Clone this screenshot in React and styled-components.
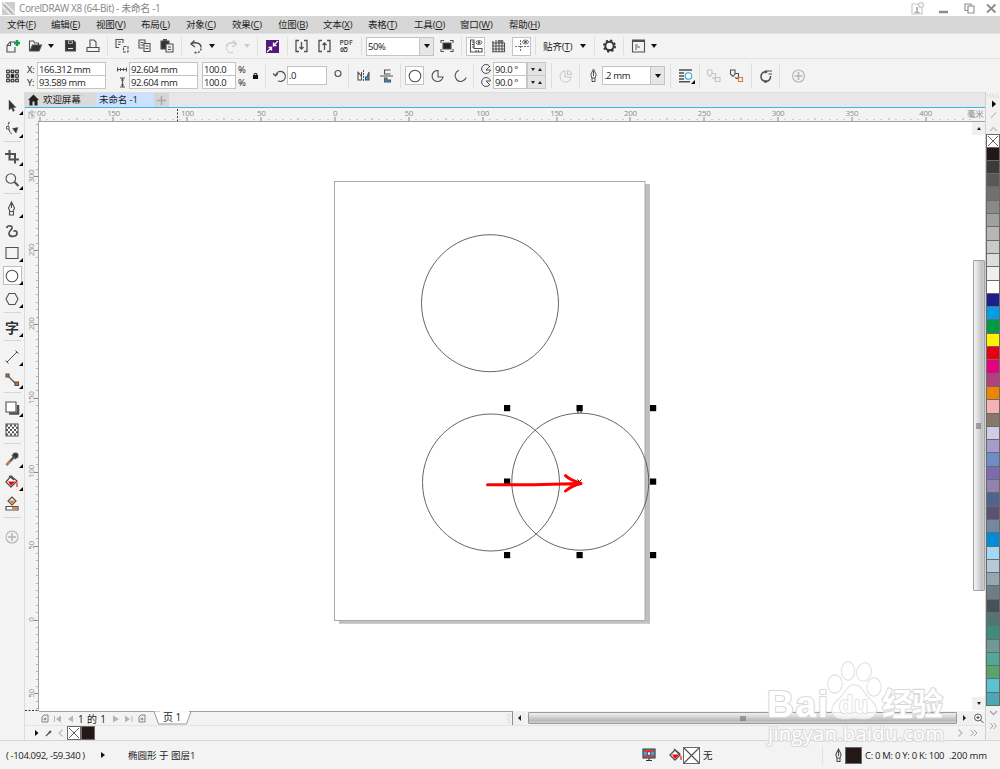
import React from 'react'
import styled, { createGlobalStyle } from 'styled-components';

const GlobalStyle=createGlobalStyle`
    *{box-sizing:border-box;}
    body{
        margin:0;
        overflow:hidden;
        background:#f3f3f3;
        font-family:'Open Sans','Noto Sans CJK SC',sans-serif;
        font-size:9.5px;
        color:#222;
    }
`;

const Window=styled.div`
    width:1000px;
    height:769px;
    display:flex;
    flex-direction:column;
    position:relative;
    overflow:hidden;
    white-space:nowrap;
`;

const TitleBar=styled.div`
    height:16px;
    flex:none;
    display:flex;
    align-items:center;
    background:#fff;
    color:#858585;
    font-size:10px;
    line-height:16px;
`;

const Title=styled.span`
    margin-left:4px;
    width:892px;
    letter-spacing:-0.4px;
`;

const MenuBar=styled.div`
    height:17px;
    flex:none;
    display:flex;
    align-items:center;
    padding-left:7px;
    background:#d7d7d7;
    line-height:16px;
`;

const MenuItem=styled.span`
    width:${(p)=>p.$w}px;
    letter-spacing:-0.15px;
`;

const Toolbar=styled.div`
    height:${(p)=>p.$h}px;
    flex:none;
    display:flex;
    align-items:center;
    background:#f3f3f3;
    border-top:1px solid #e2e2e2;
`;

const Icon=styled.svg`
    flex:none;
    display:block;
    margin-left:${(p)=>p.$gap||0}px;
    overflow:visible;
    fill:none;
    stroke:${(p)=>p.$color||'#505050'};
    stroke-width:1.1;
`;

const Sep=styled.div`
    width:1px;
    height:${(p)=>p.$h||18}px;
    flex:none;
    margin-left:${(p)=>p.$gap}px;
    background:#dedede;
`;

const Caret=styled.div`
    flex:none;
    width:0;
    height:0;
    margin-left:${(p)=>p.$gap||0}px;
    border:3px solid transparent;
    border-top:4px solid ${(p)=>p.$color||'#111'};
    border-bottom:0;
`;

const Label=styled.span`
    flex:none;
    width:${(p)=>p.$w}px;
    margin-left:${(p)=>p.$gap||0}px;
    letter-spacing:${(p)=>p.$ls||0}px;
    line-height:13px;
`;

const Stack=styled.div`
    flex:none;
    display:flex;
    flex-direction:column;
    width:${(p)=>p.$w}px;
    margin-left:${(p)=>p.$gap||0}px;
    gap:${(p)=>p.$space||0}px;
`;

const Field=styled.div`
    flex:none;
    display:flex;
    align-items:center;
    width:${(p)=>p.$w}px;
    height:${(p)=>p.$h||14}px;
    margin-left:${(p)=>p.$gap||0}px;
    padding-left:1px;
    background:#fff;
    border:1px solid #c3c3c3;
    line-height:11px;
    letter-spacing:-0.38px;
    & + &{
        margin-top:-1px;
    }
`;

const DropButton=styled.div`
    display:flex;
    align-items:center;
    justify-content:center;
    width:14px;
    height:100%;
    margin-left:auto;
    background:#e6e6e6;
    border-left:1px solid #c3c3c3;
`;

const Pressed=styled.div`
    flex:none;
    display:flex;
    align-items:center;
    justify-content:center;
    width:19px;
    height:19px;
    margin-left:${(p)=>p.$gap||0}px;
    background:#fff;
    border:1px solid #c4c4c4;
`;

const Spinner=styled.div`
    display:flex;
    align-items:center;
    justify-content:space-evenly;
    height:14px;
    background:#e4e4e4;
    border:1px solid #c8c8c8;
    & + &{
        margin-top:-1px;
    }
`;

const Up=styled.div`
    width:0;
    height:0;
    border:2.5px solid transparent;
    border-bottom:3px solid #222;
    border-top:0;
`;

const Down=styled.div`
    width:0;
    height:0;
    border:2.5px solid transparent;
    border-top:3px solid #222;
    border-bottom:0;
`;

const Body=styled.div`
    height:648px;
    flex:none;
    display:flex;
`;

const Toolbox=styled.div`
    width:25px;
    display:flex;
    flex-direction:column;
    align-items:center;
    padding-top:2px;
    border-right:1px solid #dcdcdc;
    background:#f3f3f3;
`;

const Tool=styled.div`
    flex:none;
    display:flex;
    align-items:center;
    justify-content:center;
    position:relative;
    width:19px;
    height:${(p)=>p.$h}px;
`;

const ActiveTool=styled.div`
    display:flex;
    align-items:center;
    justify-content:center;
    width:19px;
    height:19px;
    background:#fff;
    border:1px solid #bdbdbd;
`;

const Flyout=styled.div`
    position:absolute;
    right:-1px;
    bottom:2px;
    width:0;
    height:0;
    border-left:4px solid transparent;
    border-bottom:4px solid #000;
`;

const ToolSep=styled.div`
    width:17px;
    height:1px;
    margin:${(p)=>p.$m||'0 0 3px'};
    flex:none;
    background:#d6d6d6;
`;

const Center=styled.div`
    width:960px;
    display:flex;
    flex-direction:column;
`;

const Tabs=styled.div`
    height:16px;
    flex:none;
    display:flex;
    align-items:stretch;
    background:#e7e7e7;
    border-top:1px solid #dedede;
    border-bottom:1px solid #3fb4e6;
    line-height:14px;
`;

const Tab=styled.div`
    display:flex;
    align-items:center;
    width:${(p)=>p.$w}px;
    padding-left:3px;
    gap:4px;
    background:${(p)=>p.$bg};
    letter-spacing:-0.1px;
`;

const Workspace=styled.div`
    display:flex;
    height:589px;
    flex:none;
`;

const TopRuler=styled.svg`
    display:block;
    flex:none;
    background:#f3f3f3;
    letter-spacing:-0.35px;
`;

const SideRuler=styled.svg`
    display:block;
    flex:none;
    background:#f3f3f3;
    letter-spacing:-0.35px;
`;

const Canvas=styled.svg`
    display:block;
    flex:none;
    background:#fff;
`;

const VScroll=styled.div`
    width:13px;
    display:flex;
    flex-direction:column;
    align-items:center;
    background:#fff;
`;

const ArrowBox=styled.div`
    flex:none;
    display:flex;
    align-items:center;
    justify-content:center;
    width:${(p)=>p.$w}px;
    height:13px;
    background:#f0f0f0;
`;

const VThumb=styled.div`
    display:flex;
    align-items:center;
    justify-content:center;
    width:12px;
    height:331px;
    margin:125px 0 106px;
    border:1px solid #a2a2a2;
    border-radius:1px;
    background:linear-gradient(90deg,#f4f4f4,#dcdcde 40%,#bcbdbf 85%,#d5d5d5);
`;

const BottomBar=styled.div`
    height:14px;
    flex:none;
    display:flex;
    align-items:center;
    background:#f3f3f3;
`;

const Pager=styled.div`
    width:121px;
    height:14px;
    margin-left:14px;
    padding-left:2px;
    display:flex;
    align-items:center;
    border-top:1px solid #a0a0a0;
    flex:none;
    font-size:10px;
    line-height:12px;
`;

const PageCount=styled.div`
    display:flex;
    justify-content:space-between;
    width:28px;
    margin:0 7px 0 5px;
`;

const PageTab=styled(Icon)`
    margin-right:-1px;
`;

const PageFill=styled.div`
    width:324px;
    height:14px;
    display:flex;
    align-items:center;
    justify-content:flex-end;
    padding-right:1px;
    border-top:1px solid #a0a0a0;
    border-right:1px solid #8f8f8f;
    flex:none;
`;

const HThumb=styled.div`
    flex:none;
    display:flex;
    align-items:center;
    justify-content:center;
    width:429px;
    height:12px;
    margin-left:3px;
    border:1px solid #999;
    border-radius:1px;
    background:linear-gradient(#f0f0f0,#d8d8d9 35%,#b7b8ba 75%,#d0d0d0);
`;

const DocPalette=styled.div`
    height:15px;
    flex:none;
    display:flex;
    align-items:center;
    border-top:1px solid #e4e4e4;
    background:#f3f3f3;
`;

const Swatch=styled.div`
    flex:none;
    width:${(p)=>p.$w||14}px;
    height:${(p)=>p.$h||13.3}px;
    margin-left:${(p)=>p.$gap||0}px;
    border:1px solid #6a6a6a;
    border-width:${(p)=>p.$h?'1px':'0 1px 1px'};
    background:${(p)=>p.$c};
`;

const Palette=styled.div`
    width:15px;
    display:flex;
    flex-direction:column;
    align-items:center;
    padding-top:2px;
    border-left:1px solid #cfcfcf;
    background:#f1f1f1;
`;

const StatusBar=styled.div`
    height:29px;
    flex:none;
    display:flex;
    align-items:center;
    padding-left:6px;
    background:#f3f3f3;
    border-top:1px solid #d6d6d6;
`;

const Watermark=styled.svg`
    position:absolute;
    left:760px;
    top:655px;
    paint-order:stroke;
`;

const menus=[
    ['文件','F',44],['编辑','E',45],['视图','V',45],['布局','L',45],['对象','C',46],['效果','C',46],
    ['位图','B',45],['文本','X',45],['表格','T',46],['工具','O',46],['窗口','W',49],['帮助','H',45],
];

const swatches=['#231815','#3e3a39','#595757','#727171','#898989','#9fa0a0','#b5b6b5','#c9caca','#dcdddd','#efefef','#fff',
    '#1d2088','#00a0e9','#009944','#fff100','#e60012','#e4007f','#b04180','#f08300','#f5b2b2','#88766a','#cfcce6','#a69bcb',
    '#6f8cc8','#7b6cb0','#9283ac','#50648e','#5a5270','#7388a2','#008cd6','#a0d9f6','#b5cad7','#95a7b0','#6e7e86','#48515a',
    '#517672','#3f8c7c','#709896','#52a894','#57a46c','#5ac2d0','#4ca8b6'];

const SCALE=1.4767;

function HorizontalRuler(){
    const ticks=[];
    for(let mm=-200;mm<=430;mm+=5){
        const x=335+mm*SCALE;
        if(x<39) continue;
        const major=mm%50===0;
        ticks.push(<rect key={mm} x={Math.round(x)-.5} y={major?117:mm%25===0?118:119} width="1" height={major?4:mm%25===0?2:1} fill={major?'#888':'#aaa'}/>);
    }
    const labels=[-150,-100,-50,0,50,100,150,200,250,300,350,400];
    return (
        <TopRuler width="960" height="14" viewBox="25 108 960 14" fontSize="8" fill="#8c8c8c">
            <path d="M29 112l7 0M29 112v7M29 112l6 6M31 115h4M32 110v9" stroke="#999" strokeWidth=".7" fill="none"/>
            {ticks}
            {labels.map((v)=><text key={v} x={335+v*SCALE} y="116" textAnchor="middle">{Math.abs(v)}</text>)}
            <text x="37" y="116">00</text>
            <text x="967" y="116.500" fontSize="8.500">毫米</text>
            <path d="M177.500 109v12" stroke="#333" strokeDasharray="2 1.500"/>
            <rect x="38" y="121" width="947" height="1" fill="#a3a3a3"/>
        </TopRuler>
    )
}

function VerticalRuler(){
    const ticks=[];
    for(let mm=-60;mm<=335;mm+=5){
        const y=619.5-mm*1.478;
        const major=mm%50===0;
        ticks.push(<rect key={mm} x={major?34:36} y={Math.round(y)} width={major?4:2} height="1" fill={major?'#888':'#b5b5b5'}/>);
    }
    const labels=[300,250,200,150,100,50,0,-50];
    return (
        <SideRuler width="14" height="589" viewBox="25 122 14 589" fontSize="8" fill="#8c8c8c">
            {ticks}
            {labels.map((v)=>{
                const y=619.5-v*1.478;
                return <text key={v} x="34" y={y} transform={`rotate(-90 34 ${y})`} textAnchor="middle">{Math.abs(v)}</text>
            })}
            <path d="M25 710.500h13" stroke="#333" strokeDasharray="2 1.500"/>
            <rect x="38" y="121" width="1" height="590" fill="#a3a3a3"/>
        </SideRuler>
    )
}

function Drawing(){
    const handles=[[507,408],[579.5,408],[653,408],[507,481.5],[653,481.5],[507,555],[579.5,555],[653,555]];
    return (
        <Canvas width="933" height="589" viewBox="39 122 933 589" fill="none" stroke="#555" strokeWidth=".9">
            <path d="M339 620h311v3.700h-311zM645 184h5v439h-5z" fill="#c0c0c0" stroke="none"/>
            <rect x="334.500" y="181.500" width="310.500" height="439" stroke="#aaa" strokeWidth="1"/>
            <circle cx="490" cy="303.200" r="68.500"/>
            <circle cx="491" cy="482.500" r="68.500"/>
            <circle cx="580.300" cy="481.700" r="68.500"/>
            {handles.map(([x,y])=><rect key={x+'-'+y} x={x-3} y={y-3} width="6.200" height="6.200" fill="#000" stroke="none"/>)}
            <path d="M578 411v2M581 411v2M577.500 479.500l4 4m0-4l-4 4" stroke="#000"/>
            <path d="M487.500 484.700H534L581 483.500M565.500 475.700Q570 480 581 483.500Q571 486 565.500 491" stroke="#f00" strokeWidth="3" strokeLinecap="round" strokeLinejoin="round"/>
        </Canvas>
    )
}

function StandardBar(){
    return (
        <Toolbar $h={25}>
            <Icon $gap={6} width="14" height="14"><path d="M9 3H4L1 6.500V13h8V8M4.500 3v3.500H1"/><path d="M11 1v6M8 4h6" stroke="#11a04a" strokeWidth="2.500"/></Icon>
            <Icon $gap={8} width="14" height="14"><path d="M1.500 12V2h4l1 2h4v2"/><path d="M2 12l2.500-6h9L11 12z" fill="#333"/></Icon>
            <Caret $gap={6}/>
            <Icon $gap={10} width="13" height="14"><path d="M1.500 1.500h8l2 2v8.500h-10z" fill="#333"/><path d="M4.500 2h4v2.500h-4z" fill="#333" stroke="#ddd" strokeWidth=".7"/><path d="M4 9.500h5" stroke="#eee"/></Icon>
            <Icon $gap={9} width="14" height="14"><path d="M4 8V1h4l2 2v5M1 8.500h12v4H1z"/></Icon>
            <Sep $gap={7}/>
            <Icon $gap={7} width="14" height="14"><path d="M4 8.500H1v-8h7v3.500M3 3h3M3 5.500h2.500"/><path d="M8.500 7.500h4.500v5.500H8.500z" strokeDasharray="3 1"/></Icon>
            <Icon $gap={9} width="13" height="14"><path d="M5 9H1V1h6v3M2.500 3.500h3M2.500 6h3M6 4.500h6v8H6zM7.500 7h3M7.500 9.500h3"/></Icon>
            <Icon $gap={9} width="14" height="14"><path d="M1 2h8v8H1z" fill="#333"/><path d="M3 1h4" strokeWidth="2"/><path d="M6 5h7v8H6z" fill="#eee"/><path d="M8 8h3M8 10.500h3"/></Icon>
            <Sep $gap={7}/>
            <Icon $gap={7} width="14" height="14"><path d="M2 5C5 3 12 3 12 8.500" strokeWidth="1.500"/><path d="M12 9.500A4.500 4.500 0 014.500 12.500" strokeWidth="1.500" strokeDasharray="2 1.300"/><path d="M5.500 1.500L2 5l4 3" strokeWidth="1.400"/></Icon>
            <Caret $gap={6}/>
            <Icon $gap={10} width="13" height="14" $color="#ccc"><path d="M11.500 5C8.500 3 1.500 3 1.500 8.500" strokeWidth="1.500"/><path d="M1.500 9.500A4.500 4.500 0 009 12.500" strokeWidth="1.500" strokeDasharray="2 1.300"/><path d="M8 1.500L11.500 5l-4 3" strokeWidth="1.400"/></Icon>
            <Caret $gap={6} $color="#ccc"/>
            <Sep $gap={7}/>
            <Icon $gap={8} width="13" height="13"><path d="M0 0h13v13H0z" fill="#50197d" stroke="none"/><path d="M12 1L7.500 5.500V2.500M7.500 5.500h3M1 12l4.500-4.500v3M5.500 7.500h-3" stroke="#fff" strokeWidth="1.300"/></Icon>
            <Sep $gap={8}/>
            <Icon $gap={7} width="13" height="14"><path d="M4 1.500H1v11h3M9 1.500h3v11H9M6.500 3v7M4.500 8l2 2 2-2" strokeWidth="1.300"/></Icon>
            <Icon $gap={10} width="13" height="14"><path d="M4 1.500H1v11h3M9 1.500h3v11H9M6.500 4v7M4.500 6l2-2 2 2" strokeWidth="1.300"/></Icon>
            <Icon $gap={9} width="13" height="14"><text x="-.5" y="6" fontSize="7" fontWeight="600" fill="#444" stroke="none">PDF</text><path d="M1 9h2v3.500H1zM4 8.500v4h3v-4zM5.500 8v2" strokeWidth="1"/></Icon>
            <Sep $gap={8}/>
            <Field $gap={4} $w={68} $h={19}>50%<DropButton><Caret/></DropButton></Field>
            <Icon $gap={6} width="14" height="14"><path d="M3 4h8v6H3z" fill="#222"/><path d="M1 4V1.500h3M10 1.500h3V4M13 10v2.500h-3M4 12.500H1V10"/></Icon>
            <Sep $gap={7}/>
            <Pressed $gap={4}><Icon width="14" height="14"><path d="M1.500 1v12H13V9.500H5V1zM3 3h2M3 5.500h2M3 8h2M7 11v2M9.500 11v2"/><ellipse cx="10" cy="3.500" rx="3" ry="2" strokeWidth=".8"/><circle cx="10" cy="3.500" r=".8" fill="#444"/></Icon></Pressed>
            <Icon $gap={7} width="13" height="14"><path d="M1 2v11M4 1v12M7 1v12M10 1v12M12.500 4v9M0 4h13M0 7h13M0 10h13M0 12.800h13"/><path d="M6 1.500h5v2H6z" fill="#777" strokeWidth=".5"/></Icon>
            <Pressed $gap={7}><Icon width="14" height="14"><path d="M5.500 1v12M0 7.500h14" strokeDasharray="2 1" strokeWidth=".8"/><ellipse cx="10.500" cy="3" rx="3" ry="2" strokeWidth=".8"/><circle cx="10.500" cy="3" r=".8" fill="#444"/></Icon></Pressed>
            <Sep $gap={4}/>
            <Label $gap={7} $w={31} $ls={-0.1}>贴齐(<u>T</u>)</Label>
            <Caret $gap={6}/>
            <Sep $gap={8}/>
            <Icon $gap={8} width="13" height="14"><circle cx="6.500" cy="7" r="4.200" stroke="#333" strokeWidth="2"/><circle cx="6.500" cy="7" r="5.700" stroke="#333" strokeWidth="1.600" strokeDasharray="2.240 2.240"/></Icon>
            <Sep $gap={7}/>
            <Icon $gap={8} width="13" height="14"><path d="M.5 1h12v12H.5z"/><path d="M.5 2h12" strokeWidth="2"/><path d="M3 6h3M3 8h5M3 10h2" strokeWidth=".9"/></Icon>
            <Caret $gap={6}/>
        </Toolbar>
    )
}

function PropertyBar(){
    return (
        <Toolbar $h={34}>
            <Icon $gap={6} width="13" height="14">
                {[2,6.5,11].map((x)=>[2.5,7,11.5].map((y)=><rect key={x+'-'+y} x={x-1.3} y={y-1.3} width="2.600" height="2.600" fill={x===6.5&&y===7?'#111':'none'} stroke="#222" strokeWidth="1"/>))}
                <path d="M3.500 2.500h2M8 2.500h2M3.500 11.500h2M8 11.500h2M2 4v2M11 4v2M2 8v2M11 8v2" strokeWidth=".8"/>
            </Icon>
            <Stack $gap={8} $w={10}><Label $w={10} $ls={-.3}>X:</Label><Label $w={10} $ls={-.3}>Y:</Label></Stack>
            <Stack $w={69}><Field $w={69}>166.312 mm</Field><Field $w={69}>93.589 mm</Field></Stack>
            <Stack $gap={11} $w={12} $space={2}>
                <Icon width="10" height="11"><path d="M.5 3.500v4M9.500 3.500v4M1 5.500h8M3.500 4v3M6.500 4v3" strokeWidth="1"/></Icon>
                <Icon width="10" height="11"><path d="M3 1h5M3 10h5M5.500 1v9M4 3h3M4 8h3"/></Icon>
            </Stack>
            <Stack $w={69}><Field $w={69}>92.604 mm</Field><Field $w={69}>92.604 mm</Field></Stack>
            <Stack $gap={4} $w={34}><Field $w={34}>100.0</Field><Field $w={34}>100.0</Field></Stack>
            <Stack $gap={2} $w={15}><Label $w={10}>%</Label><Label $w={10}>%</Label></Stack>
            <Icon width="5" height="8" $color="#111"><path d="M.5 3.500h4v3h-4z" fill="#111"/><path d="M1.200 3V1.500h2.600V3" strokeWidth=".9"/></Icon>
            <Sep $gap={7} $h={25}/>
            <Icon $gap={7} width="13" height="14"><path d="M2.500 6.500a5 5 0 112.500 5.300" /><path d="M0 4.500l2.500 2.500L5 4.500"/></Icon>
            <Field $gap={1} $w={40} $h={19}>.0</Field>
            <Icon $gap={7} width="8" height="14"><circle cx="4" cy="4.500" r="3"/></Icon>
            <Sep $gap={6} $h={25}/>
            <Icon $gap={8} width="13" height="14"><path d="M1 2.500v8.500h3.500V8.500M1 3l3.500 4.500V3" /><path d="M6.500 1v12" strokeDasharray="2 1" strokeWidth="1"/><path d="M12 3v8H8.500V8H10z" fill="#19a6e6"/></Icon>
            <Icon $gap={10} width="13" height="14"><path d="M10.500 1H4.500v4h6M0 7h13" /><path d="M10.500 13h-6V9H7v2h3.500z" fill="#19a6e6"/></Icon>
            <Sep $gap={7} $h={25}/>
            <Pressed $gap={4}><Icon width="14" height="14"><circle cx="7" cy="7" r="5.800"/></Icon></Pressed>
            <Icon $gap={7} width="13" height="14"><path d="M7 1.500a5.500 5.500 0 105 6.500H7z" /></Icon>
            <Icon $gap={10} width="13" height="14"><path d="M5 1.300a5.700 5.700 0 107.200 7.200"/></Icon>
            <Sep $gap={6} $h={25}/>
            <Stack $gap={7} $w={12} $space={1}>
                <Icon width="11" height="12"><path d="M8.500 3A4.500 4.500 0 109.500 7H5l4-4" strokeWidth="1"/></Icon>
                <Icon width="11" height="12"><path d="M8.500 9A4.500 4.500 0 119.500 5H5l4 4" strokeWidth="1"/></Icon>
            </Stack>
            <Stack $w={34}><Field $w={34}>90.0 °</Field><Field $w={34}>90.0 °</Field></Stack>
            <Stack $w={19}><Spinner><Down/><Up/></Spinner><Spinner><Down/><Up/></Spinner></Stack>
            <Sep $gap={5} $h={25}/>
            <Icon $gap={7} width="13" height="14" $color="#c8c8c8"><path d="M6 2a5.500 5.500 0 106 6H6zM8.500 1.500v4h4a4 4 0 00-4-4"/></Icon>
            <Sep $gap={7} $h={25}/>
            <Icon $gap={10} width="7" height="13"><path d="M3.500 0L.8 5.500 2 9h3l1.200-3.500zM3.500 2v5M2 9v3.500h3V9" strokeWidth="1"/></Icon>
            <Field $gap={5} $w={63} $h={19}>.2 mm<DropButton><Caret/></DropButton></Field>
            <Sep $gap={5} $h={25}/>
            <Icon $gap={8} width="15" height="14"><path d="M0 1h13M0 4h5M0 7h5M0 10h5M0 12.800h11" strokeWidth="1.400"/><circle cx="9.500" cy="7" r="3.300" stroke="#2aa7df" fill="#fff"/><path d="M16 11v4h-4z" fill="#000" stroke="none"/></Icon>
            <Sep $gap={5} $h={25}/>
            <Icon $gap={7} width="14" height="14" $color="#c4c4c4"><path d="M.5 1h4.500v4L3 7.500.5 5zM5 4.500h3.500v4L7 9.500 5 8.500M8.500 8.500h4.500v4H8.500z"/></Icon>
            <Icon $gap={9} width="14" height="14"><path d="M.5 1h4.500v4L3 7.500.5 5zM5 4.500h3.500v4L7 9.500 5 8.500"/><path d="M8.500 8.500h4v4h-4z" stroke="#e8743b"/></Icon>
            <Sep $gap={7} $h={25}/>
            <Icon $gap={7} width="14" height="14"><path d="M7 2.800a4.800 4.800 0 104.500 4.200" strokeWidth="1.500"/><path d="M8 2h5M9.500 5H13" /><path d="M6 1.800h2v2H6zM5.500 11.500h2v2h-2z" fill="#505050" strokeWidth=".5"/></Icon>
            <Sep $gap={6} $h={25}/>
            <Icon $gap={12} width="13" height="14" $color="#b5b5b5"><circle cx="6.500" cy="7" r="6"/><path d="M6.500 3v8M2.500 7h8" strokeWidth="1.600"/></Icon>
        </Toolbar>
    )
}

function ToolItem({h=23,fly=true,active,children}){
    const icon=<Icon width="14" height="14">{children}</Icon>;
    return (
        <Tool $h={h}>
            {active?<ActiveTool>{icon}</ActiveTool>:icon}
            {fly&&<Flyout/>}
        </Tool>
    )
}

function LeftTools(){
    return (
        <Toolbox>
            <ToolItem><path d="M4 1v10l2.500-2 1.500 3.500 1.500-1L8 8.500h3z" fill="#333" strokeWidth=".5"/></ToolItem>
            <ToolItem><path d="M4.500 0C2.500 2 2.500 7 6.500 12" strokeDasharray="3 .8"/><path d="M1.500 4.500h2.500V7H1.500z" fill="#f3f3f3" strokeWidth=".9"/><path d="M7.500 6.500L13 5.500 11 11z" fill="#333" strokeWidth=".5"/></ToolItem>
            <ToolSep $m="1px 0 3px"/>
            <ToolItem><path d="M4.500 0v9.500H14M0 4h10v9.500" strokeWidth="2"/></ToolItem>
            <ToolItem h={24}><circle cx="5.800" cy="5.500" r="4.800"/><path d="M9.500 9l4 4" strokeWidth="2"/></ToolItem>
            <ToolSep $m="1px 0 3px"/>
            <ToolItem><path d="M6.500 0L3.500 6 5 9.500h3L9.500 6zM6.500 1v5M4.500 9.500V13h4V9.500"/></ToolItem>
            <ToolItem fly={false} h={22}><path d="M1.500 4c1-3 6-3 5.500 0-.5 2.500-3.500 3-3 6 .6 3.500 8 3 8-1 0-2-2-3-3.500-1.500" strokeWidth="1.700"/></ToolItem>
            <ToolItem h={22}><path d="M1 1.500h12v11H1z"/></ToolItem>
            <ToolItem active><circle cx="7" cy="7" r="5.800"/></ToolItem>
            <ToolItem><path d="M4 1.500h6L13 7l-3 5.500H4L1 7z"/></ToolItem>
            <ToolSep $m="2px 0 3px"/>
            <ToolItem><text x="0" y="12" fontSize="14" fontWeight="700" fill="#333" stroke="none">字</text></ToolItem>
            <ToolSep $m="1px 0 4px"/>
            <ToolItem><path d="M2 12L12 2M.5 10.500l3 3M10.500.5l3 3" strokeWidth="1"/></ToolItem>
            <ToolItem><path d="M3 3l8 8"/><path d="M1 1h3v3H1zM10 9h3.500v3.500H10z" fill="#e56717"/></ToolItem>
            <ToolSep $m="1px 0 3px"/>
            <ToolItem><path d="M4 12.500h9V4" strokeWidth="2.500"/><path d="M1 1h10v10H1z" fill="#fff"/></ToolItem>
            <ToolItem fly={false} h={22}>
                <path d="M1 1h12v12H1z" fill="#fff"/>
                <path d="M1 2.500h12M1 7h12M1 11.500h12" strokeWidth="2" strokeDasharray="2 2"/>
                <path d="M3 4.700h10M3 9.200h10" strokeWidth="2" strokeDasharray="2 2"/>
            </ToolItem>
            <ToolSep $m="2px 0 3px"/>
            <ToolItem><path d="M9 5l-7.500 8" stroke="#555" strokeWidth="2.500"/><path d="M5.500 9L2 12.500" stroke="#ea8845"/><circle cx="10.500" cy="3.500" r="2.500" fill="#333"/><path d="M7 3l4 4" strokeWidth="1.500"/></ToolItem>
            <ToolItem><path d="M6 1L1 7l5 5 6-6zM4 1l5 4" fill="#fff" strokeWidth="1.300"/><path d="M4 7h5l-3 3zM12 7.500v4.500" fill="red" stroke="red"/></ToolItem>
            <ToolItem fly={false} h={22}><path d="M7 0L3 4l4 4 4-4zM1 9.500h12v3.500H1z" fill="#fff" strokeWidth="1.200"/><path d="M5 4h4L7 6z" fill="#e87b2b" stroke="#e87b2b"/><path d="M7 11.200h5.500" stroke="#e87b2b" strokeWidth="2"/></ToolItem>
            <ToolSep $m="2px 0 7px"/>
            <ToolItem fly={false}><g stroke="#b5b5b5"><circle cx="7" cy="7" r="6"/><path d="M7 3v8M3 7h8" strokeWidth="1.500"/></g></ToolItem>
        </Toolbox>
    )
}

const NoColor=<Icon width="12" height="12" viewBox="0 0 12 12"><path d="M1 1l10 10M11 1L1 11" strokeWidth=".9"/></Icon>;

export default function App() {
  return (
    <>
    <GlobalStyle/>
    <Window>
        <TitleBar>
            <Icon $gap={2} width="13" height="13" $color="none"><path d="M0 0h13v13H0z" fill="#cdcdcd"/><path d="M1 0l12 11M0 4l9 9" stroke="#f4f4f4" strokeWidth="1.300"/><path d="M2 3l8 8" stroke="#b5b5b5" strokeWidth="2"/></Icon>
            <Title>CorelDRAW X8 (64-Bit) - 未命名 -1</Title>
            <Icon width="13" height="13" $color="#c6c6c6"><path d="M1 2h10v10H1z"/><path d="M3.500 10.500h5M6 5v5" stroke="#aaa" strokeWidth="1.600"/><circle cx="10" cy="3" r="2.500" fill="#f4f4f4"/></Icon>
            <Icon $gap={15} width="9" height="13" $color="#8b8b8b"><path d="M0 10h9" strokeWidth="2.500"/></Icon>
            <Icon $gap={16} width="11" height="13" $color="#8b8b8b"><path d="M4 4h6v7H4zM7 3.500V2H1v6.500h2.500"/></Icon>
            <Icon $gap={11} width="10" height="13" $color="#8b8b8b"><path d="M1 2.500l8.500 8M9.500 2.500L1 10.500" strokeWidth="1.800"/></Icon>
        </TitleBar>
        <MenuBar>
            {menus.map(([name,key,w])=><MenuItem key={name} $w={w}>{name}(<u>{key}</u>)</MenuItem>)}
        </MenuBar>
        <StandardBar/>
        <PropertyBar/>
        <Body>
            <LeftTools/>
            <Center>
                <Tabs>
                    <Tab $w={71} $bg="#dadada"><Icon width="11" height="12" $color="none"><path d="M5.500.5L0 6h1.500v5.500h3v-4h2v4h3V6H11z" fill="#222"/></Icon>欢迎屏幕</Tab>
                    <Tab $w={58} $bg="#cbe1ff">未命名 -1</Tab>
                    <Tab $w={15} $bg="#d5d5d5"><Icon width="9" height="9" $color="#a8a8a8"><path d="M4.500 0v9M0 4.500h9" strokeWidth="1.500"/></Icon></Tab>
                </Tabs>
                <HorizontalRuler/>
                <Workspace>
                    <VerticalRuler/>
                    <Drawing/>
                    <VScroll>
                        <ArrowBox $w={13}><Up/></ArrowBox>
                        <VThumb><Icon width="5" height="6"><path d="M0 1h5M0 3h5M0 5h5" strokeWidth=".9"/></Icon></VThumb>
                        <ArrowBox $w={13}><Down/></ArrowBox>
                    </VScroll>
                </Workspace>
                <BottomBar>
                    <Pager>
                        <Icon width="8" height="9" $color="#777"><path d="M1 3l2-2h4v7H1zM4 3.500v3M2.500 5h3" strokeWidth=".9"/></Icon>
                        <Icon $gap={5} width="8" height="8" $color="none"><path d="M0 1h1v6H0zM7 .5v7L2 4z" fill="#b5b5b5"/></Icon>
                        <Icon $gap={5} width="6" height="8" $color="none"><path d="M6 .5v7L1 4z" fill="#b5b5b5"/></Icon>
                        <PageCount><span>1</span><span>的</span><span>1</span></PageCount>
                        <Icon width="6" height="8" $color="none"><path d="M0 .5v7l6-3.500z" fill="#b5b5b5"/></Icon>
                        <Icon $gap={6} width="8" height="8" $color="none"><path d="M0 .5v7l5-3.500zM6.500 1h1v6h-1z" fill="#b5b5b5"/></Icon>
                        <Icon $gap={5} width="8" height="9" $color="#777"><path d="M1 3l2-2h4v7H1zM4 3.500v3M2.500 5h3" strokeWidth=".9"/></Icon>
                    </Pager>
                    <PageTab width="30" height="14"><path d="M-6 .5L-1.500 13H26.500L31 .5" fill="#fff" stroke="#999" strokeWidth="1"/><text x="3" y="10" fontSize="10" fill="#222" stroke="none">页 1</text></PageTab>
                    <PageFill><Icon width="4" height="10" $color="#c8c8c8"><path d="M1 0v10M3 1v9" strokeDasharray="1 1.500"/></Icon></PageFill>
                    <ArrowBox $w={12}><Icon width="4" height="6" $color="none"><path d="M4 0v6L1 3z" fill="#222"/></Icon></ArrowBox>
                    <HThumb><Icon width="6" height="5"><path d="M1 0v5M3 0v5M5 0v5" strokeWidth=".9"/></Icon></HThumb>
                    <ArrowBox $w={15}><Icon width="4" height="6" $color="none"><path d="M0 0v6l3-3z" fill="#222"/></Icon></ArrowBox>
                    <Icon $gap={2} width="10" height="10"><circle cx="4" cy="4.500" r="3.500" strokeWidth=".9"/><path d="M4 3v3M2.500 4.500h3M6.500 7l3 3" strokeWidth="1"/></Icon>
                </BottomBar>
                <DocPalette>
                    <Icon $gap={10} width="4" height="8" $color="none"><path d="M0 1v6l3.500-3z" fill="#111"/></Icon>
                    <Icon $gap={6} width="7" height="8"><path d="M1 7l3.500-3.500"/><path d="M4 4l2-2" strokeWidth="2"/></Icon>
                    <Icon $gap={6} width="5" height="8" $color="#bbb"><path d="M4.500.5L1 4l3.500 3.500"/></Icon>
                    <Swatch $gap={4} $h={14} $c="#fff">{NoColor}</Swatch>
                    <Swatch $h={14} $c="#231815"/>
                    <Icon $gap={863} width="5" height="8" $color="#b3b3b3"><path d="M.5.500L4 4 .5 7.500"/></Icon>
                    <Icon $gap={7} width="8" height="8" $color="#a5a5a5"><path d="M.5 1l3 3-3 3M4 1l3 3-3 3" strokeWidth="1"/></Icon>
                </DocPalette>
            </Center>
            <Palette>
                <Icon width="12" height="5" $color="#c8c8c8"><path d="M0 1h12M1 3h12" strokeDasharray="1 1.500" strokeWidth="1"/></Icon>
                <Icon width="5" height="11" $color="none"><path d="M1 1.500v7l4-3.500z" fill="#000"/></Icon>
                <Icon width="7" height="12" $color="#b9b9b9"><path d="M1 8l5-5.500"/></Icon>
                <Icon width="8" height="12" $color="#c2c2c2"><path d="M1 9l3.500-3.500L8 9" strokeWidth="1.400"/></Icon>
                <Swatch $h={13.6} $c="#fff">{NoColor}</Swatch>
                {swatches.map((c)=><Swatch key={c} $c={c}/>)}
                <Icon width="8" height="14" $color="#a5a5a5"><path d="M1 5l3.500 3.500L8 5" strokeWidth="1.300"/></Icon>
                <Icon width="8" height="12" $color="#a5a5a5"><path d="M1 3l3 3-3 3M4.500 3l3 3-3 3" strokeWidth="1"/></Icon>
            </Palette>
        </Body>
        <StatusBar>
            <Label $w={95} $ls={-0.36}>( -104.092, -59.340 )</Label>
            <Icon width="4" height="8" $color="none"><path d="M0 1v6l4-3z" fill="#111"/></Icon>
            <Label $gap={23} $w={514}>椭圆形 于 图层1</Label>
            <Icon width="14" height="14"><path d="M1 1h12v9H1zM4 12.500h6M7 10v2" fill="#3aa9df" stroke="#333"/><path d="M2 3h10M2 8h10" stroke="#e33" strokeWidth="2"/><circle cx="7" cy="5.500" r="1.800" fill="#fff"/></Icon>
            <Icon $gap={13} width="14" height="14"><path d="M6 2L1 7l5 5 5-5zM5 1l6 5" fill="#fff" strokeWidth="1.400"/><path d="M4 7h5l-3 3zM12 8v4" fill="red" stroke="red"/></Icon>
            <Swatch $w={17} $h={17} $c="#fff"><Icon width="15" height="15" viewBox="0 0 15 15"><path d="M0 0l15 15M15 0L0 15"/></Icon></Swatch>
            <Label $gap={3} $w={120}>无</Label>
            <Sep $gap={-1} $h={17}/>
            <Icon $gap={12} width="7" height="13"><path d="M3.500 0L.8 5.500 2 9h3l1.200-3.500zM3.500 2v5M2 9v3.500h3V9"/></Icon>
            <Swatch $gap={3} $w={17} $h={17} $c="#231815"/>
            <Label $gap={3} $w={84} $ls={-0.3}>C: 0 M: 0 Y: 0 K: 100</Label>
            <Label $w={40} $ls={-0.15}>.200 mm</Label>
        </StatusBar>
        <Watermark width="190" height="95" viewBox="760 655 190 95" fill="#fff" stroke="#d9d9d9" strokeWidth="2.200" strokeLinejoin="round">
            <g fillOpacity=".7" strokeWidth="1.300">
                <ellipse cx="835" cy="684" rx="7" ry="9"/>
                <ellipse cx="848" cy="671" rx="6.500" ry="9"/>
                <ellipse cx="864" cy="672" rx="7" ry="9" transform="rotate(12 864 672)"/>
                <ellipse cx="874" cy="687" rx="7" ry="9"/>
                <path d="M854 685c7 0 9 6 13 11 5 6 11 9 9 16-2 8-12 7-22 6-10 1-20 2-22-6-1-7 5-11 10-16 4-5 6-11 12-11z"/>
            </g>
            <text x="767" y="716.500" fontSize="37" fontWeight="700" fontFamily="Liberation Sans, sans-serif" textLength="61">Bai</text>
            <text x="839" y="713" fontSize="23" fontWeight="700" fontFamily="Liberation Sans, sans-serif" textLength="29" strokeWidth="1.600">du</text>
            <text x="882" y="715" fontSize="31" fontWeight="700" fontFamily="Noto Sans CJK SC, sans-serif" textLength="61">经验</text>
            <text x="768" y="740.500" fontSize="20" fontFamily="Open Sans, sans-serif" textLength="176">jingyan.baidu.com</text>
        </Watermark>
    </Window>
    </>
  )
}
